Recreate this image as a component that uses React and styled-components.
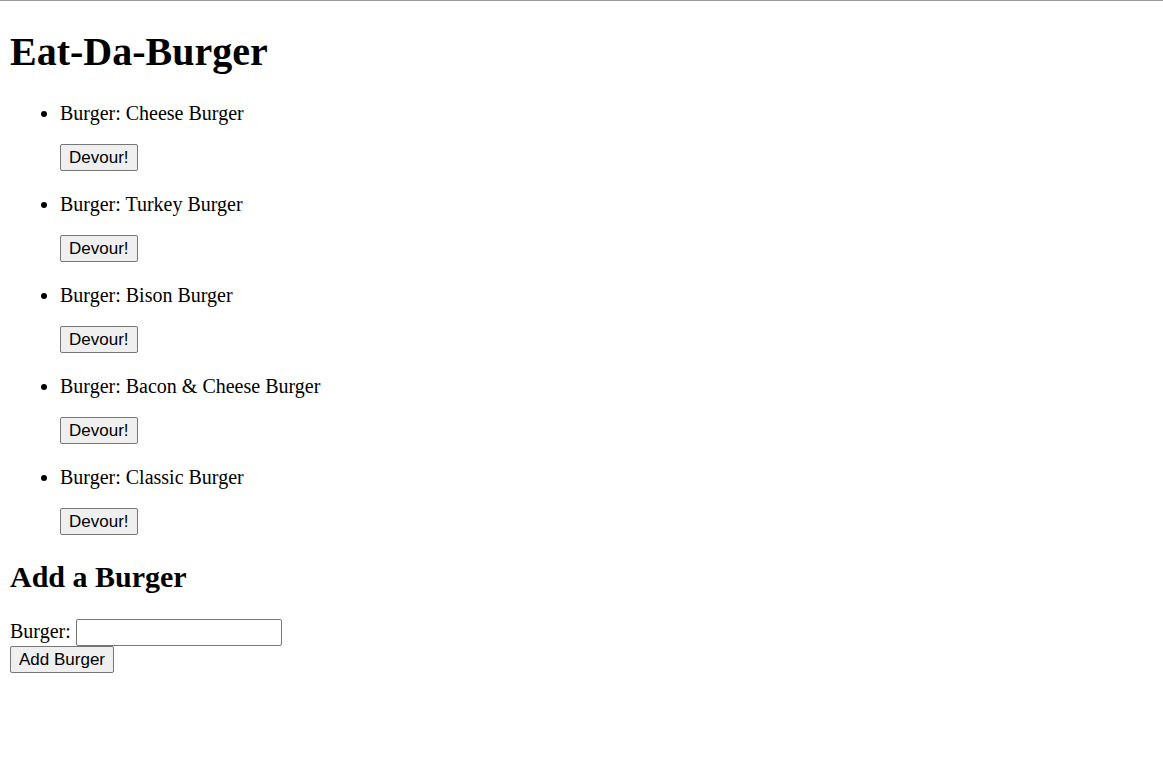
import React from "react";
import styled, { createGlobalStyle } from "styled-components";

const GlobalStyle = createGlobalStyle`
  *, *::before, *::after { box-sizing: border-box; }
  body {
    margin: 0;
    background: #fff;
    color: #000;
    font-family: "Liberation Serif", "Times New Roman", serif;
    font-size: 20px;
    line-height: 22px;
  }
`;

const Page = styled.main`
  border-top: 1px solid #999;
  padding: 27px 10px 10px;
`;

const Title = styled.h1`
  margin: 0 0 27px;
  font-size: 40px;
  line-height: 47px;
`;

const Subtitle = styled.h2`
  margin: 24px 0;
  font-size: 30px;
  line-height: 36px;
`;

const BurgerList = styled.ul`
  display: grid;
  gap: 22px;
  margin: 0;
  padding-left: 50px;
`;

const BurgerName = styled.p`
  margin: 0 0 20px;
`;

const Button = styled.button`
  display: block;
  height: 27px;
  padding: 0 8px;
  border: 1px solid #767676;
  border-radius: 2px;
  background: #efefef;
  color: #000;
  font-family: "Liberation Sans", Arial, sans-serif;
  font-size: 17px;
  line-height: 22px;
`;

const Field = styled.div`
  display: flex;
  align-items: baseline;
  gap: 5px;
`;

const TextInput = styled.input`
  width: 206px;
  height: 27px;
  padding: 1px 2px;
  border: 1px solid #767676;
  border-radius: 2px;
  background: #fff;
  font-family: "Liberation Sans", Arial, sans-serif;
  font-size: 17px;
`;

const burgers = [
  "Cheese Burger",
  "Turkey Burger",
  "Bison Burger",
  "Bacon & Cheese Burger",
  "Classic Burger",
];

export default function App() {
  return (
    <>
      <GlobalStyle />
      <Page>
        <Title>Eat-Da-Burger</Title>
        <BurgerList>
          {burgers.map((name) => (
            <li key={name}>
              <BurgerName>Burger: {name}</BurgerName>
              <Button type="button">Devour!</Button>
            </li>
          ))}
        </BurgerList>
        <Subtitle>Add a Burger</Subtitle>
        <form onSubmit={(event) => event.preventDefault()}>
          <Field>
            <label htmlFor="burger">Burger:</label>
            <TextInput type="text" id="burger" name="burger" />
          </Field>
          <Button type="submit">Add Burger</Button>
        </form>
      </Page>
    </>
  );
}
